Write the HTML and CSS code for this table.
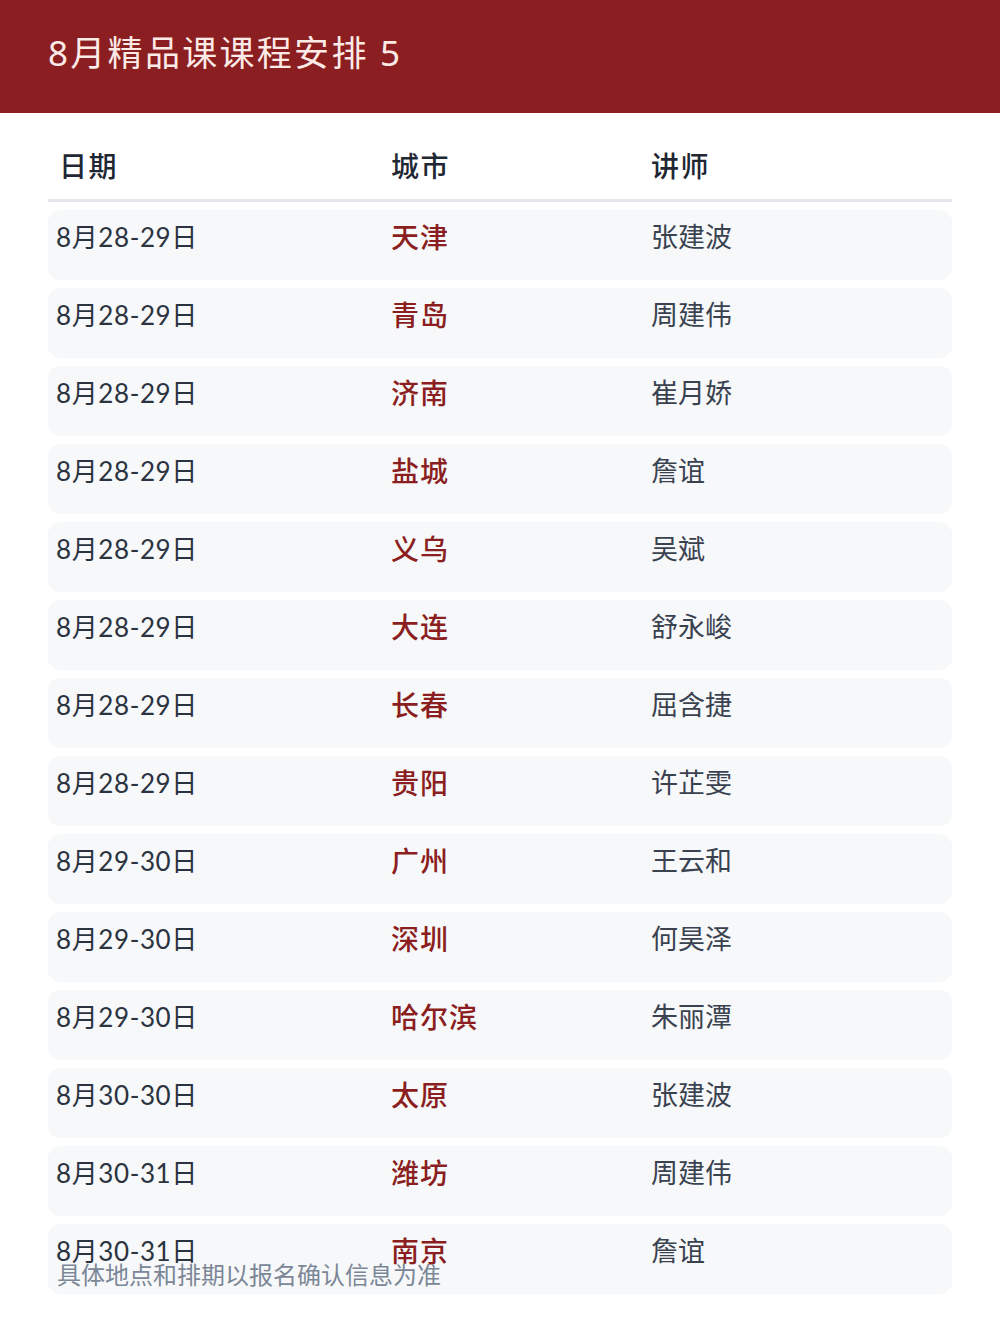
FILE: index.html
```html
<!DOCTYPE html>
<html lang="zh-CN">
<head>
<meta charset="utf-8">
<title>8月精品课课程安排 5</title>
<link rel="stylesheet" href="styles.css">
</head>
<body>
<header class="topbar"><h1 class="title">8月精品课课程安排 5</h1></header>
<main class="content">
  <div class="table">
    <div class="thead">
      <div class="th th-date">日期</div>
      <div class="th">城市</div>
      <div class="th">讲师</div>
    </div>
    <div class="tbody">
      <div class="row"><div class="cell date">8月28-29日</div><div class="cell city">天津</div><div class="cell teacher">张建波</div></div>
      <div class="row"><div class="cell date">8月28-29日</div><div class="cell city">青岛</div><div class="cell teacher">周建伟</div></div>
      <div class="row"><div class="cell date">8月28-29日</div><div class="cell city">济南</div><div class="cell teacher">崔月娇</div></div>
      <div class="row"><div class="cell date">8月28-29日</div><div class="cell city">盐城</div><div class="cell teacher">詹谊</div></div>
      <div class="row"><div class="cell date">8月28-29日</div><div class="cell city">义乌</div><div class="cell teacher">吴斌</div></div>
      <div class="row"><div class="cell date">8月28-29日</div><div class="cell city">大连</div><div class="cell teacher">舒永峻</div></div>
      <div class="row"><div class="cell date">8月28-29日</div><div class="cell city">长春</div><div class="cell teacher">屈含捷</div></div>
      <div class="row"><div class="cell date">8月28-29日</div><div class="cell city">贵阳</div><div class="cell teacher">许芷雯</div></div>
      <div class="row"><div class="cell date">8月29-30日</div><div class="cell city">广州</div><div class="cell teacher">王云和</div></div>
      <div class="row"><div class="cell date">8月29-30日</div><div class="cell city">深圳</div><div class="cell teacher">何昊泽</div></div>
      <div class="row"><div class="cell date">8月29-30日</div><div class="cell city">哈尔滨</div><div class="cell teacher">朱丽潭</div></div>
      <div class="row"><div class="cell date">8月30-30日</div><div class="cell city">太原</div><div class="cell teacher">张建波</div></div>
      <div class="row"><div class="cell date">8月30-31日</div><div class="cell city">潍坊</div><div class="cell teacher">周建伟</div></div>
      <div class="row"><div class="cell date">8月30-31日</div><div class="cell city">南京</div><div class="cell teacher">詹谊</div></div>
    </div>
  </div>
  <p class="note">具体地点和排期以报名确认信息为准</p>
</main>
</body>
</html>
```

FILE: styles.css
```css
* { box-sizing: border-box; }
html, body { margin: 0; padding: 0; background: #ffffff; }
body {
  min-height: 1320px;
  font-family: "Lato", "Noto Sans CJK SC", sans-serif;
  color: #2b3340;
}
.topbar {
  background: #8b1e20;
  height: 113px;
  padding: 0 48px;
  display: flex;
  align-items: center;
}
.title {
  margin: 0;
  font-family: "Noto Sans", "Noto Sans CJK SC", sans-serif;
  font-weight: 400;
  font-size: 35px;
  letter-spacing: 2.3px;
  color: #fbeae6;
  position: relative;
  top: -6px;
}
.content {
  padding: 0 48px;
}
.table {
  height: 1147px;
}
.thead {
  display: grid;
  grid-template-columns: 335px 260px 1fr;
  height: 89px;
  padding-top: 32px;
  border-bottom: 3px solid #e3e7eb;
}
.th {
  padding-left: 8px;
  font-size: 28px;
  line-height: 42px;
  font-weight: 500;
  color: #1f2733;
  letter-spacing: 1.5px;
}
.th-date { padding-left: 11px; }
.tbody {
  display: flex;
  flex-direction: column;
  gap: 8px;
  padding-top: 8px;
}
.row {
  display: grid;
  grid-template-columns: 335px 260px 1fr;
  height: 70px;
  background: #f7f8fa;
  border-radius: 12px;
  padding-top: 9px;
}
.cell {
  padding-left: 8px;
  font-size: 26px;
  line-height: 36px;
}
.date { color: #2b3340; letter-spacing: 0.6px; font-weight: 400; }
.city {
  color: #8b1e20;
  font-weight: 500;
  font-size: 28px;
  letter-spacing: 1px;
}
.teacher { color: #3a4250; font-size: 27px; font-weight: 400; }
.note {
  margin: 0 0 0 9px;
  position: relative;
  font-size: 24px;
  line-height: 30px;
  font-weight: 400;
  color: #7b8796;
}
```
